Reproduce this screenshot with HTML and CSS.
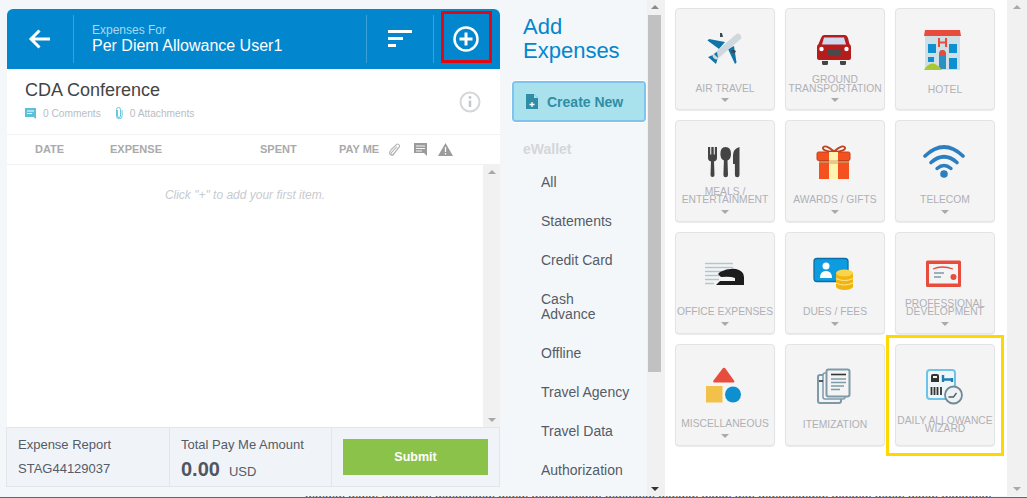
FILE: index.html
```html
<!DOCTYPE html>
<html lang="en">
<head>
<meta charset="utf-8">
<title>Add Expenses</title>
<link rel="stylesheet" href="styles.css">
</head>
<body>
<div class="shell">
  <section class="report">
    <header class="report-head">
      <div class="head-back">
        <svg width="24" height="24" viewBox="0 0 24 24"><path d="M22 12H3M11.500 3.500L3 12l8.500 8.500" fill="none" stroke="#fff" stroke-width="3"/></svg>
      </div>
      <div class="head-title">
        <div class="head-small">Expenses For</div>
        <div class="head-name">Per Diem Allowance User1</div>
      </div>
      <div class="head-sort">
        <svg width="24" height="18" viewBox="0 0 24 18"><path d="M0 1.500h24M0 8.500h15M0 15.500h8" stroke="#fff" stroke-width="3"/></svg>
      </div>
      <div class="head-add">
        <svg width="28" height="28" viewBox="0 0 28 28"><circle cx="14" cy="14" r="11.500" fill="none" stroke="#fff" stroke-width="2.500"/><path d="M14 7.500v13M7.500 14h13" stroke="#fff" stroke-width="3"/></svg>
      </div>
    </header>
    <div class="report-info">
      <div>
        <h1 class="report-name">CDA Conference</h1>
        <div class="report-meta">
          <svg class="meta-ico" width="11" height="11" viewBox="0 0 11 11"><path d="M0 0h11v11L8.500 9H0z" fill="#5cc0d8"/><path d="M2 3h7M2 5.500h5" stroke="#fff"/></svg>
          <span class="meta-text">0 Comments</span>
          <svg class="meta-ico meta-clip" width="8" height="12" viewBox="0 0 8 12"><path d="M2.500 3v6a1.500 1.500 0 0 0 3 0V2.500a2 2 0 0 0-4 .0V9a2.800 2.800 0 0 0 5.600 0V3" fill="none" stroke="#6cc5dc"/></svg>
          <span class="meta-text">0 Attachments</span>
        </div>
      </div>
      <svg class="info-ico" width="22" height="22" viewBox="0 0 22 22"><circle cx="11" cy="11" r="9.500" fill="none" stroke="#d4d7da" stroke-width="2"/><path d="M11 9.500v6.500" stroke="#c5c8cb" stroke-width="2.500"/><circle cx="11" cy="6.500" r="1.400" fill="#c5c8cb"/></svg>
    </div>
    <div class="table-head">
      <span class="col col-date">DATE</span>
      <span class="col col-expense">EXPENSE</span>
      <span class="col col-spent">SPENT</span>
      <span class="col col-pay">PAY ME</span>
      <svg class="col-ico" width="12" height="15" viewBox="0 0 12 15"><path d="M3 6l4-4.200a2 2 0 0 1 3 2.700L4 11.500a1.200 1.200 0 0 1-1.800-1.600L8 3.500M1 13.500" fill="none" stroke="#b4b4b4" stroke-width="1.100" transform="translate(0 1)"/><path d="M9.500 5.500L4.500 12.500a2.300 2.300 0 0 1-3.600-2.800L3 6.500" fill="none" stroke="#b4b4b4" stroke-width="1.100"/></svg>
      <svg class="col-ico col-comment" width="14" height="13" viewBox="0 0 14 13"><path d="M0 0h13v13l-3-3H0z" fill="#9b9b9b"/><path d="M2 3h9M2 5.500h9M2 8h6" stroke="#f4f4f4"/></svg>
      <svg class="col-ico" width="15" height="13" viewBox="0 0 15 13"><path d="M7.500 0L15 13H0z" fill="#9b9b9b"/><path d="M7.500 4v5M7.500 10v1.500" stroke="#fff" stroke-width="1.300"/></svg>
    </div>
    <div class="table-body">
      <p class="empty">Click "+" to add your first item.</p>
      <div class="scroll scroll-list"><i class="arrow-up"></i><i class="arrow-down"></i></div>
    </div>
    <footer class="report-foot">
      <div class="foot-cell foot-report">
        <div>Expense Report</div>
        <div class="foot-id">STAG44129037</div>
      </div>
      <div class="foot-cell foot-total">
        <div>Total Pay Me Amount</div>
        <div class="foot-amount"><b>0.00</b><span>USD</span></div>
      </div>
      <div class="foot-cell foot-action"><button class="submit" type="button">Submit</button></div>
    </footer>
    <div class="mark-red"></div>
  </section>

  <nav class="side">
    <h2 class="side-title">Add<br>Expenses</h2>
    <div class="create">
      <svg width="12" height="15" viewBox="0 0 12 15"><path d="M0 0h8l4 4v11H0z" fill="#2f8ea6"/><path d="M8 0v4h4z" fill="#a9e1ec"/><path d="M6 8v5M3.500 10.500h5" stroke="#fff" stroke-width="1.300"/></svg>
      <span>Create New</span>
    </div>
    <div class="side-group">eWallet</div>
    <ul class="side-list">
      <li>All</li>
      <li>Statements</li>
      <li>Credit Card</li>
      <li>Cash<br>Advance</li>
      <li>Offline</li>
      <li>Travel Agency</li>
      <li>Travel Data</li>
      <li>Authorization</li>
    </ul>
  </nav>
  <div class="scroll scroll-side"><i class="arrow-up"></i><b class="thumb"></b><i class="arrow-down"></i></div>

  <main class="types">
    <div class="grid">
      <div class="tile">
        <div class="tile-icon"><svg width="48" height="48" viewBox="0 0 48 48">
          <path d="M24 17L8 14l-1.500 1.500L18 24zM27 24l7 15 1.500-1.500L33 21z" fill="#0f75a8"/>
          <path d="M19 8h2l1 4h-3zM30 25h3l2 1-1 2h-3z" fill="#3a4a55"/>
          <path d="M12 30L7 32l8 7 1.500-5z" fill="#0f75a8"/>
          <path d="M37 12L15 31" stroke="#cfd8dc" stroke-width="6.500" stroke-linecap="round"/>
          <path d="M17 33L13 29l3-2z" fill="#0f75a8"/>
        </svg></div>
        <div class="tile-label">AIR TRAVEL</div><i class="caret"></i>
      </div>
      <div class="tile">
        <div class="tile-icon"><svg width="48" height="48" viewBox="0 0 48 48">
          <path d="M11 36h6v2.500a1.500 1.500 0 0 1-1.500 1.500h-3a1.500 1.500 0 0 1-1.500-1.500zM29 36h6v2.500a1.500 1.500 0 0 1-1.500 1.500h-3a1.500 1.500 0 0 1-1.500-1.500z" fill="#444"/>
          <path d="M13 10h21q2 0 3 3l1.500 6q1.500 1 1.500 3v11q0 2-2 2H8q-2 0-2-2V22q0-2 1.500-3L10 13q1-3 3-3z" fill="#b71c1c"/>
          <path d="M13 12.500h20l2 7H11z" fill="#cfd8f0"/>
          <circle cx="10.500" cy="24" r="2.200" fill="#fff"/><circle cx="35.500" cy="24" r="2.200" fill="#fff"/>
          <rect x="16" y="25" width="14" height="5" rx="1" fill="#4a4a4a"/>
        </svg></div>
        <div class="tile-label">GROUND<br>TRANSPORTATION</div><i class="caret"></i>
      </div>
      <div class="tile">
        <div class="tile-icon"><svg width="48" height="48" viewBox="0 0 48 48">
          <rect x="4" y="8" width="35" height="37" fill="#cfdfe6"/>
          <path d="M4 5h35l1 6H3z" fill="#e74c3c"/>
          <path d="M18 13v9M25 13v9M18 17.500h7" stroke="#e74c3c" stroke-width="2"/>
          <path d="M7 19h8v9H7zM28 19h8v9h-8zM28 33h8v11h-8z" fill="#0e8fcf"/>
          <path d="M7 32h6v5H7z" fill="#0e8fcf"/>
          <path d="M18 44V30q0-5 3.500-5t3.500 5v14z" fill="#2c8fc4"/>
          <path d="M18 30q0-5 3.500-5t3.500 5z" fill="#e74c3c"/>
          <path d="M3 45q4-7 9-6.500 5 1 9 6.500z" fill="#a9c832"/>
        </svg></div>
        <div class="tile-label tile-label-solo">HOTEL</div>
      </div>

      <div class="tile">
        <div class="tile-icon"><svg width="48" height="48" viewBox="0 0 48 48" fill="#444">
          <path d="M7 10h2.200v7.500h1.100V10h2.400v7.500h1.100V10H16v11q0 2.500-3 3.500l.5 13.500a2 2 0 0 1-4 0l.5-13.500q-3-1-3-3.500z"/>
          <path d="M24.500 10q5.500 0 5.500 7 0 5-3.500 6.500l.5 14.500a2.300 2.300 0 0 1-4.600 0l.5-14.500q-3.500-1.500-3.500-6.500 0-7 5-7z"/>
          <path d="M38.500 10v28a2.300 2.300 0 0 1-4.600 0V27H32V18q0-6 6.500-8z"/>
        </svg></div>
        <div class="tile-label">MEALS /<br>ENTERTAINMENT</div><i class="caret"></i>
      </div>
      <div class="tile">
        <div class="tile-icon"><svg width="48" height="48" viewBox="0 0 48 48">
          <path d="M22.500 14Q14 7 12 10.500 11 14 22.500 15zM23.500 14Q32 7 34 10.500 35 14 23.500 15z" fill="none" stroke="#c0431f" stroke-width="1.800"/>
          <rect x="8" y="22" width="30" height="20" fill="#f4511e"/>
          <rect x="8" y="22" width="30" height="4" fill="#d8834f"/>
          <rect x="6" y="15" width="33" height="8.500" rx="1.500" fill="#f4511e" stroke="#c0431f"/>
          <rect x="18" y="15" width="9" height="27" fill="#fff3b0"/>
          <rect x="18" y="23" width="9" height="4" fill="#e8c98a"/>
        </svg></div>
        <div class="tile-label">AWARDS / GIFTS</div><i class="caret"></i>
      </div>
      <div class="tile">
        <div class="tile-icon"><svg width="48" height="48" viewBox="0 0 48 48" fill="none" stroke="#2b7fc0" stroke-linecap="round">
          <path d="M4 19Q23 1 42 19" stroke-width="3.600"/>
          <path d="M10 25.500Q23 14 36 25.500" stroke-width="3.600"/>
          <path d="M16 31.500Q23 25.500 30 31.500" stroke-width="3.400"/>
          <circle cx="23" cy="37" r="3.800" fill="#2b7fc0" stroke="none"/>
        </svg></div>
        <div class="tile-label">TELECOM</div><i class="caret"></i>
      </div>

      <div class="tile">
        <div class="tile-icon"><svg width="48" height="48" viewBox="0 0 48 48">
          <path d="M4 14.500h28M4 18.500h28M4 22.500h18M4 26.500h16M4 30.500h14M4 34.500h9" stroke="#b4c5cf" stroke-width="1.700"/>
          <path d="M19 23q8-4 16-3 8 2 8 8v8H15l4-4h15v-3q-5-2-14-1l-3-3z" fill="#1c1c1c"/>
        </svg></div>
        <div class="tile-label">OFFICE EXPENSES</div><i class="caret"></i>
      </div>
      <div class="tile">
        <div class="tile-icon"><svg width="48" height="48" viewBox="0 0 48 48">
          <rect x="3" y="9.500" width="34" height="23" rx="3" fill="#0e9ce0" stroke="#0b6ea5" stroke-width="1.300"/>
          <circle cx="15" cy="17" r="3.500" fill="#fff"/>
          <path d="M9 29q0-7 6-7t6 7z" fill="#fff"/>
          <path d="M25 24h17v14q-2 3-8.500 3T25 38z" fill="#f2b410"/>
          <ellipse cx="33.500" cy="24" rx="8.500" ry="3.500" fill="#f8d54a"/>
          <path d="M25 29.500q8.500 4 17 0M25 34q8.500 4 17 0" stroke="#fdeb9a" fill="none"/>
        </svg></div>
        <div class="tile-label">DUES / FEES</div><i class="caret"></i>
      </div>
      <div class="tile">
        <div class="tile-icon"><svg width="48" height="48" viewBox="0 0 48 48">
          <rect x="5" y="11.500" width="35" height="26.500" rx="1.500" fill="#e74c3c"/>
          <rect x="8" y="15" width="29" height="19.500" fill="#f4f4f4"/>
          <path d="M12 20q9-4 20 0" stroke="#e74c3c" stroke-width="1.300" fill="none"/>
          <path d="M13 24h10" stroke="#7e9aa8" stroke-width="1.500"/><path d="M13 28h7" stroke="#7e9aa8" stroke-width="1.500"/>
          <circle cx="32.500" cy="28" r="3" fill="#e74c3c"/>
        </svg></div>
        <div class="tile-label">PROFESSIONAL<br>DEVELOPMENT</div><i class="caret"></i>
      </div>

      <div class="tile">
        <div class="tile-icon"><svg width="48" height="48" viewBox="0 0 48 48">
          <path d="M22 7q1-.7 2 0l9 12.500q1 2-1 2H13.500q-2 0-1-2z" fill="#e74c3c"/>
          <rect x="5" y="25" width="16.500" height="16.500" fill="#f2c14a"/>
          <circle cx="32" cy="33.500" r="8" fill="#0e8fcf"/>
        </svg></div>
        <div class="tile-label">MISCELLANEOUS</div><i class="caret"></i>
      </div>
      <div class="tile">
        <div class="tile-icon"><svg width="48" height="48" viewBox="0 0 48 48">
          <rect x="7" y="14" width="23" height="28" rx="2" fill="#f4f4f4" stroke="#7e9aa8" stroke-width="2"/>
          <rect x="12" y="12" width="22" height="26" rx="2" fill="#f4f4f4" stroke="#7e9aa8" stroke-width="1.500"/>
          <rect x="15.500" y="8.500" width="23" height="27" rx="2" fill="#f4f4f4" stroke="#7e9aa8" stroke-width="2"/>
          <path d="M20 13.500h15" stroke="#333" stroke-width="1.600"/>
          <path d="M20 18h15M20 21.500h15M20 25h13M20 28.500h9" stroke="#7e9aa8" stroke-width="1.300"/>
          <path d="M8 20h4" stroke="#333" stroke-width="1.600"/>
        </svg></div>
        <div class="tile-label tile-label-solo tile-label-low">ITEMIZATION</div>
      </div>
      <div class="tile">
        <div class="tile-icon"><svg width="48" height="48" viewBox="0 0 48 48">
          <rect x="6" y="9" width="28" height="29" rx="3" fill="#eef6fa" stroke="#6cc5e8" stroke-width="2"/>
          <path d="M10 21v-6q0-2 2-2h4q2 0 2 2v6z" fill="#333"/>
          <path d="M12 15h4v2h-4z" fill="#eef6fa"/>
          <path d="M22 14v7M31 17v4M22 18.500h9" stroke="#1f7fb5" stroke-width="2.400"/>
          <path d="M10.500 26v8M13.500 26v8M16.500 26v8M20 26v8" stroke="#333" stroke-width="1.800"/>
          <circle cx="32.500" cy="34" r="8.500" fill="#eef2f3" stroke="#6f8a97" stroke-width="1.800"/>
          <path d="M27.500 36h5l3-4" stroke="#4a5c66" fill="none" stroke-width="1.300"/>
        </svg></div>
        <div class="tile-label tile-label-solo tile-label-low">DAILY ALLOWANCE<br>WIZARD</div>
      </div>
    </div>
    <div class="scroll scroll-main"><i class="arrow-up"></i><i class="arrow-down"></i></div>
    <div class="mark-yellow"></div>
  </main>
</div>
<div class="cutoff"><span>mmmm mmm mmmmm mmmmmm mmm mmmmmmm mmmmm mmmm mmm mm mmmmmmm mmmm mmm mmm mmmmm</span></div>
</body>
</html>
```

FILE: styles.css
```css
* { box-sizing: border-box; }
html, body { margin: 0; padding: 0; height: 498px; overflow: hidden; }
body {
  font-family: "Liberation Sans", Arial, sans-serif;
  background: #f4f7fa;
  color: #555;
}
.shell { display: flex; height: 496px; position: relative; }

/* left report panel */
.report {
  position: relative;
  flex: none;
  width: 493px;
  height: 478px;
  margin: 9px 10px 0 7px;
  display: flex;
  flex-direction: column;
  background: #fff;
  border-radius: 6px 6px 0 0;
}
.report-head {
  flex: none;
  height: 60px;
  display: flex;
  align-items: stretch;
  background: #0286cd;
  border-radius: 6px 6px 0 0;
  color: #fff;
}
.head-back, .head-sort, .head-add { display: flex; align-items: center; justify-content: center; }
.head-back { width: 66px; }
.head-title {
  flex: 1;
  padding: 8px 0 0 18px;
  margin: 6px 0;
  border-left: 1px solid #3aa0d8;
  border-right: 1px solid #3aa0d8;
}
.head-small { font-size: 12px; line-height: 14px; color: #a9d8f2; }
.head-name { font-size: 16px; line-height: 18px; }
.head-sort { width: 67px; margin: 6px 0; border-right: 1px solid #3aa0d8; }
.head-add { width: 66px; padding-right: 2px; }
.report-info {
  flex: none;
  height: 66px;
  padding: 10px 19px 0 18px;
  display: flex;
  justify-content: space-between;
  align-items: flex-start;
  border-bottom: 1px solid #f0f2f4;
}
.report-name { margin: 0; font-size: 18px; line-height: 22px; font-weight: 400; color: #444; }
.report-meta { display: flex; align-items: center; margin-top: 5px; height: 14px; }
.meta-ico { flex: none; }
.meta-clip { margin-left: 14px; }
.meta-text { font-size: 10.200px; color: #b9bdc2; margin-left: 7px; }
.info-ico { margin-top: 12px; }
.table-head {
  flex: none;
  height: 30px;
  padding-bottom: 2px;
  display: flex;
  align-items: center;
  border-bottom: 1px solid #f0f2f4;
}
.col { font-size: 11px; font-weight: 700; color: #aaa; }
.col-date { margin-left: 28px; width: 75px; }
.col-expense { width: 150px; }
.col-spent { width: 79px; }
.col-pay { width: 50px; }
.col-ico { margin: 2px 13px 0 0; flex: none; }
.col-comment { margin-right: 10px; }
.table-body { flex: 1; position: relative; }
.empty {
  margin: 23px 0 0;
  padding-right: 17px;
  text-align: center;
  font-size: 12px;
  line-height: 14px;
  font-style: italic;
  color: #c8cbce;
}
.report-foot {
  flex: none;
  height: 60px;
  margin-left: -1px;
  display: flex;
  background: #f0f4f8;
  border: 1px solid #e2e6ea;
  font-size: 13px;
  color: #555b66;
}
.foot-cell { border-right: 1px solid #e2e6ea; }
.foot-report { width: 163px; padding: 9px 0 0 11px; }
.foot-id { margin-top: 9px; }
.foot-total { width: 162px; padding: 9px 0 0 11px; }
.foot-amount { display: flex; align-items: baseline; margin-top: 5px; }
.foot-amount b { font-size: 20px; line-height: 25px; color: #50565f; }
.foot-amount span { margin-left: 9px; }
.foot-action { flex: 1; border-right: 0; padding: 11px 11px 0 11px; }
.submit {
  display: block;
  width: 145px;
  height: 36px;
  border: 0;
  padding: 0;
  background: #8bc34a;
  color: #fff;
  font: 700 12.500px "Liberation Sans", Arial, sans-serif;
}
.mark-red {
  position: absolute;
  left: 434px;
  top: 2px;
  width: 51px;
  height: 52px;
  border: 3px solid #e30613;
}

/* scrollbars */
.scroll { background: #f1f1f1; position: relative; }
.arrow-up, .arrow-down {
  position: absolute;
  left: 50%;
  margin-left: -4px;
  width: 0;
  height: 0;
  border-left: 4px solid transparent;
  border-right: 4px solid transparent;
}
.arrow-up { top: 5px; border-bottom: 4px solid #a8a8a8; }
.arrow-down { bottom: 5px; border-top: 4px solid #a8a8a8; }
.scroll-list { position: absolute; top: 0; right: 0; bottom: 0; width: 17px; }
.scroll-side { flex: none; width: 18px; height: 496px; }
.scroll-side .arrow-up { margin-left: -5px; border-bottom-color: #8a8a8a; }
.scroll-side .arrow-down { margin-left: -5px; border-top-color: #333; }
.thumb { position: absolute; left: 1px; right: 4px; top: 15px; height: 357px; background: #c1c1c1; }

/* middle nav */
.side { flex: none; width: 137px; padding-left: 3px; }
.side-title {
  margin: 15px 0 0 10px;
  font-size: 22px;
  line-height: 24px;
  font-weight: 400;
  color: #0286cd;
}
.create {
  margin: 18px 0 0 -1px;
  width: 134px;
  height: 41px;
  display: flex;
  align-items: center;
  gap: 9px;
  padding-left: 12px;
  background: #a9e1ec;
  border: 2px solid #7fc4ee;
  outline: 1px solid #fff;
  border-radius: 3px;
  font-size: 14px;
  font-weight: 700;
  color: #2f8ea6;
}
.side-group { margin: 19px 0 0 10px; font-size: 14px; line-height: 16px; font-weight: 700; color: #d5d6d8; }
.side-list { list-style: none; margin: 6px 0 0; padding: 0; font-size: 14px; line-height: 15px; color: #555b66; }
.side-list li { padding: 12px 0 12px 28px; }

/* right category grid */
.types { flex: 1; position: relative; background: #fff; display: flex; height: 496px; }
.grid {
  flex: 1;
  display: grid;
  grid-template-columns: repeat(3, 100px);
  grid-auto-rows: 102px;
  gap: 10px;
  padding: 8px 0 0 10px;
}
.tile {
  display: flex;
  flex-direction: column;
  align-items: center;
  background: #f4f4f4;
  border: 1px solid #e4e4e4;
  border-radius: 4px;
  box-shadow: 0 1px 1px #ececec;
}
.tile-icon { height: 48px; margin-top: 16px; flex: none; }
.tile-icon svg { display: block; }
.tile-label {
  height: 18px;
  margin: 1px 0 6px;
  display: flex;
  flex-direction: column;
  justify-content: flex-end;
  text-align: center;
  white-space: nowrap;
  font-size: 10.300px;
  line-height: 8px;
  color: #b0b0b5;
}
.tile-label-solo { height: 16px; margin-top: 7px; justify-content: center; }
.tile-label-low { padding-top: 1px; }
.tile:nth-child(-n+3) .tile-label { margin-top: 2px; margin-bottom: 5px; line-height: 9px; }
.tile:nth-child(3) .tile-label-solo { margin-top: 8px; }
.caret {
  width: 0;
  height: 0;
  border-left: 4px solid transparent;
  border-right: 4px solid transparent;
  border-top: 4px solid #aaa;
}
.scroll-main { flex: none; width: 20px; }
.mark-yellow {
  position: absolute;
  left: 221px;
  top: 335px;
  width: 118px;
  height: 121px;
  border: 3px solid #ffd800;
  pointer-events: none;
}

/* cut off text at the lower edge */
.cutoff {
  height: 2px;
  overflow: hidden;
  background: #f4f7fa;
  border-bottom: 1px solid #666;
  padding-left: 305px;
  font-size: 12px;
  line-height: 4px;
  color: #555;
  white-space: nowrap;
}
```
